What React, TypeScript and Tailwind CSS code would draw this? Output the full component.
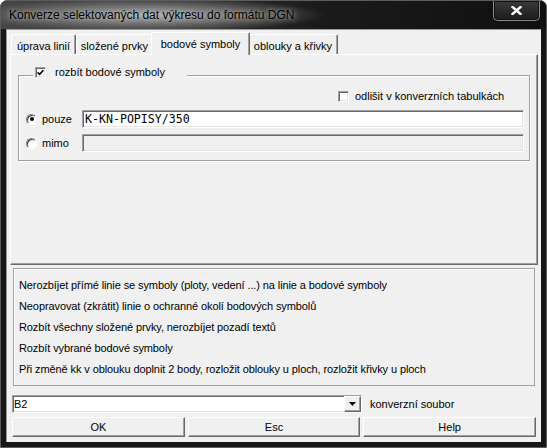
const raised =
  "border border-t-white border-l-white border-r-[#696969] border-b-[#696969] shadow-[inset_-1px_-1px_0_#a0a0a0]";
const sunken =
  "border border-t-[#a0a0a0] border-l-[#a0a0a0] border-r-white border-b-white shadow-[inset_1px_1px_0_#696969,inset_-1px_-1px_0_#e3e3e3]";

function CheckBox({ checked }: { checked?: boolean }) {
  return (
    <span className={`flex h-[11px] w-[11px] shrink-0 items-center justify-center bg-white ${sunken}`}>
      {checked && (
        <svg width="7" height="7" viewBox="0 0 7 7">
          <path d="M0.6 3.4 L2.6 5.4 L6.4 1.2" fill="none" stroke="#000" strokeWidth="1.6" />
        </svg>
      )}
    </span>
  );
}

function Radio({ checked }: { checked?: boolean }) {
  return (
    <span className="flex h-[11px] w-[11px] shrink-0 items-center justify-center rounded-full border border-t-[#808080] border-l-[#808080] border-r-white border-b-white bg-white shadow-[inset_1px_1px_0_#404040]">
      {checked && <span className="h-[4px] w-[4px] rounded-full bg-black" />}
    </span>
  );
}

function Tab({ label, size, active }: { label: string; size: string; active?: boolean }) {
  if (active) {
    return (
      <div
        className={`relative z-10 -mx-[2px] -mb-[1px] h-[23px] ${size} rounded-t-[2px] border border-b-0 border-t-white border-l-white border-r-[#696969] bg-[#f0f0f0] pt-[2px] text-center leading-[18px] shadow-[inset_-1px_0_0_#a0a0a0]`}
      >
        {label}
      </div>
    );
  }
  return (
    <div
      className={`h-[20px] ${size} rounded-t-[2px] border border-b-0 border-t-white border-l-white border-r-[#696969] pt-[2px] text-center leading-[18px] shadow-[inset_-1px_0_0_#a0a0a0]`}
    >
      {label}
    </div>
  );
}

const rows = [
  "Nerozbíjet přímé linie se symboly (ploty, vedení ...) na linie a bodové symboly",
  "Neopravovat (zkrátit) linie o ochranné okolí bodových symbolů",
  "Rozbít všechny složené prvky, nerozbíjet pozadí textů",
  "Rozbít vybrané bodové symboly",
  "Při změně kk v oblouku doplnit 2 body, rozložit oblouky u ploch, rozložit křivky u ploch",
];

export default function App() {
  return (
    <div className="flex h-[448px] w-[547px] flex-col overflow-hidden rounded-t-[7px] border border-[#5c5c5c] bg-[#161616] font-['Liberation_Sans',Arial,sans-serif] text-[11px] text-black">
      {/* title bar */}
      <div className="flex h-[28px] shrink-0 items-start bg-[radial-gradient(ellipse_175px_17px_at_150px_14px,rgba(190,190,190,0.85),rgba(190,190,190,0)),linear-gradient(90deg,#474747_0%,#363636_30%,#1b1b1b_58%,#101010_100%)]">
        <span className="ml-[8px] mt-[7px] text-[12px] leading-[15px] text-black [text-shadow:0_0_5px_#cfcfcf]">
          Konverze selektovaných dat výkresu do formátu DGN
        </span>
        <div className="ml-auto mr-[6px] flex h-[20px] w-[47px] items-center justify-center rounded-b-[5px] border border-t-0 border-[#8a8a8a] bg-[linear-gradient(180deg,#3a3a3a,#1c1c1c)] shadow-[inset_0_0_0_1px_#111]">
          <svg width="11" height="9" viewBox="0 0 11 9">
            <path d="M1.5 1 L9.5 8 M9.5 1 L1.5 8" stroke="#fff" strokeWidth="2.4" strokeLinecap="square" />
          </svg>
        </div>
      </div>

      {/* client */}
      <div className="mx-[5px] mb-[5px] flex flex-1 flex-col border-t border-l border-[#9a9a9a] bg-[#f0f0f0]">
        <div className="pl-[3px] pr-[3px] pt-[2px]">
          <div className="flex h-[22px] items-end pl-[1px]">
            <Tab label="úprava linií" size="w-[65px]" />
            <Tab label="složené prvky" size="w-[77px]" />
            <Tab label="bodové symboly" size="w-[99px]" active />
            <Tab label="oblouky a křivky" size="w-[90px]" />
          </div>
          <div className={`h-[211px] w-[528px] ${raised} pt-[12px] pl-[7px]`}>
            <fieldset className="h-[94px] w-[512px] border border-[#a0a0a0] shadow-[inset_1px_1px_0_#fff,1px_1px_0_#fff]">
              <legend className="ml-[14px] flex h-[16px] w-[154px] items-start bg-[#f0f0f0] pl-[2px]">
                <CheckBox checked />
                <span className="ml-[9px] leading-[11px]">rozbít bodové symboly</span>
              </legend>
              <div className="mt-[8px] flex items-start pl-[319px]">
                <CheckBox />
                <span className="ml-[6px] leading-[11px]">odlišit v konverzních tabulkách</span>
              </div>
              <div className="mt-[8px] flex h-[18px] items-center pl-[7px]">
                <Radio checked />
                <span className="ml-[5px] w-[40px] leading-[18px]">pouze</span>
                <div className={`h-[18px] w-[442px] bg-white pl-[2px] pt-[2px] font-['DejaVu_Sans_Mono',monospace] text-[11.6px] leading-[12px] ${sunken}`}>
                  K-KN-POPISY/350
                </div>
              </div>
              <div className="mt-[6px] flex h-[18px] items-center pl-[7px]">
                <Radio />
                <span className="ml-[5px] w-[40px] leading-[18px]">mimo</span>
                <div className={`h-[18px] w-[442px] bg-[#f0f0f0] ${sunken}`} />
              </div>
            </fieldset>
          </div>
        </div>

        <div className="mx-[6px] mt-[3px] h-[118px] border border-[#a0a0a0] pl-[5px] pt-[6px] tracking-[-0.1px] shadow-[inset_1px_1px_0_#fff]">
          {rows.map((r) => (
            <div key={r} className="leading-[21px]">
              {r}
            </div>
          ))}
        </div>

        <div className="mx-[5px] mt-[9px] flex h-[18px] items-center">
          <div className={`flex h-[18px] w-[350px] items-stretch bg-white ${sunken}`}>
            <span className="flex-1 pl-[1px] leading-[16px]">B2</span>
            <div className={`flex w-[17px] items-center justify-center bg-[#f0f0f0] ${raised}`}>
              <svg width="7" height="4" viewBox="0 0 7 4">
                <path d="M0 0 H7 L3.5 4 Z" fill="#000" />
              </svg>
            </div>
          </div>
          <span className="ml-[8px]">konverzní soubor</span>
        </div>

        <div className="mx-[5px] mt-[4px] grid h-[20px] grid-cols-3 gap-[3px]">
          <button className={`bg-[#f0f0f0] leading-[18px] ${raised}`}>OK</button>
          <button className={`bg-[#f0f0f0] leading-[18px] ${raised}`}>Esc</button>
          <button className={`bg-[#f0f0f0] leading-[18px] ${raised}`}>Help</button>
        </div>
      </div>
    </div>
  );
}
